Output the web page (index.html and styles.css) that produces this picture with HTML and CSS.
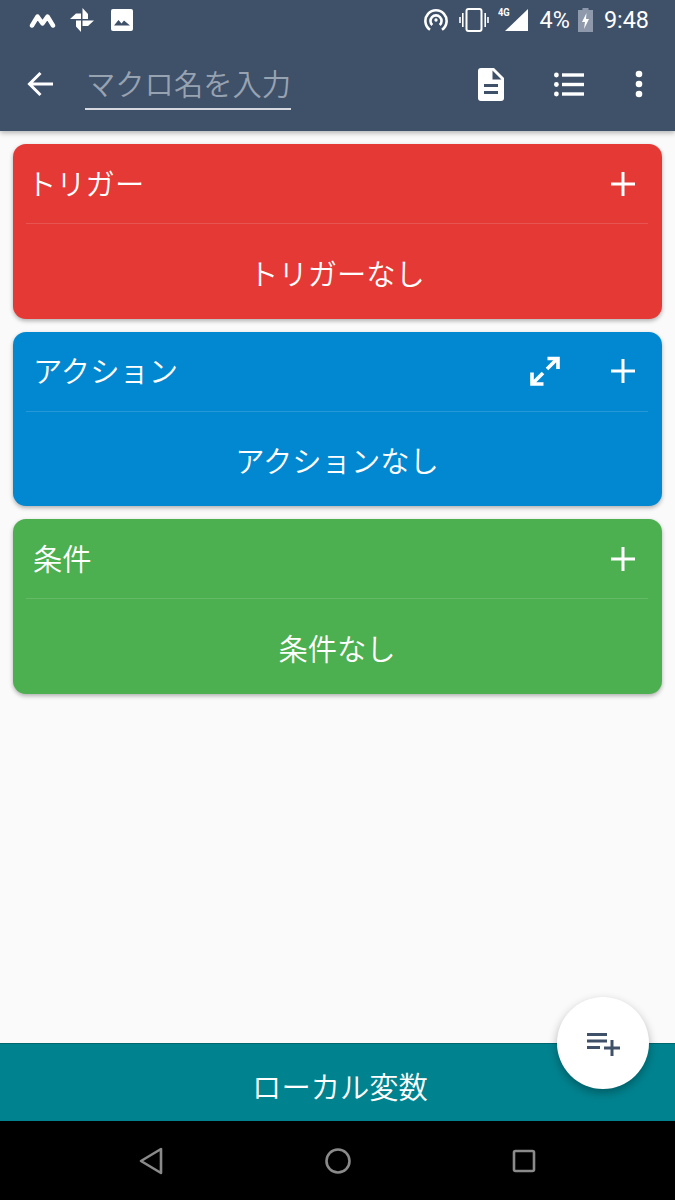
FILE: index.html
```html
<!DOCTYPE html>
<html lang="ja">
<head>
  <meta charset="UTF-8" />
  <meta name="viewport" content="width=device-width, initial-scale=1" />
  <title>マクロ編集</title>
  <link rel="stylesheet" href="styles.css">
</head>
<body>
  <div class="screen">
    <header class="appbar">
      <div class="statusbar">
        <div class="status-left">
          <svg class="ic-m" viewBox="0 0 27 15"><path d="M3 12.500 8.500 3.500 13.500 10.500 18.500 3.500 24 12.500" fill="none" stroke="#fff" stroke-width="4.400" stroke-linejoin="round" stroke-linecap="round"/></svg>
          <svg class="ic-pin" viewBox="0 0 24 24"><path fill="#fff" d="M12.500 0 18 6v5h-5.500ZM24 12.500 18 18h-5.500v-5.500ZM11 24 6 18.500v-6h5ZM0 11 6 5.500h5V11Z"/></svg>
          <svg class="ic-img" viewBox="0 0 22 22"><rect width="22" height="22" rx="2" fill="#fff"/><path fill="#3f5069" d="M3 16.500 7.500 11l3 3.500 2.500-3 6 5Z"/></svg>
        </div>
        <div class="status-right">
          <svg class="ic-hot" viewBox="0 0 26 26" fill="none" stroke="#fff" stroke-width="2.800"><path d="M6.500 23.500a11.500 11.500 0 1 1 13 0"/><path d="M9 18.500a6 6 0 1 1 8 0"/><circle cx="13" cy="13" r="1.800" fill="#fff" stroke="none"/></svg>
          <svg class="ic-vib" viewBox="0 0 30 24" fill="none" stroke="#fff"><rect x="7.500" y="1" width="15" height="22" rx="2" stroke-width="2"/><path d="M3.800 5v14M1 9v6M26.200 5v14M29 9v6" stroke-width="1.600"/></svg>
          <div class="signal">
            <span class="net">4G</span>
            <svg class="ic-sig" viewBox="0 0 23 22"><path fill="#fff" d="M23 0v22H0Z"/></svg>
          </div>
          <span class="pct">4%</span>
          <svg class="ic-bat" viewBox="0 0 15 24"><path fill="#8e9aab" d="M4.500 0h6v2H15v22H0V2h4.500Z"/><path fill="#fff" d="M8.500 5 4 14h3l-1 7 5-10H8Z"/></svg>
          <span class="clock">9:48</span>
        </div>
      </div>
      <div class="toolbar">
        <svg class="ic-back" viewBox="0 0 26 26" fill="none" stroke="#fff" stroke-width="3"><path d="M26 13H3M13.500 2 2.500 13l11 11"/></svg>
        <div class="name-field">マクロ名を入力</div>
        <svg class="ic-doc" viewBox="0 0 26 33"><path fill="#fff" d="M3 0h13l10 10v20a3 3 0 0 1-3 3H3a3 3 0 0 1-3-3V3a3 3 0 0 1 3-3Z"/><path fill="#3f5069" d="M14.500 2.500V11.500h9ZM6 16h14v3H6ZM6 23h14v3H6Z"/></svg>
        <svg class="ic-list" viewBox="0 0 30 25"><g fill="#fff"><circle cx="2.400" cy="3" r="2.400"/><circle cx="2.400" cy="12.500" r="2.400"/><circle cx="2.400" cy="22" r="2.400"/><rect x="8" y="1.300" width="22" height="3.400"/><rect x="8" y="10.800" width="22" height="3.400"/><rect x="8" y="20.300" width="22" height="3.400"/></g></svg>
        <svg class="ic-more" viewBox="0 0 8 28"><g fill="#fff"><circle cx="4" cy="4" r="3.300"/><circle cx="4" cy="14" r="3.300"/><circle cx="4" cy="24" r="3.300"/></g></svg>
      </div>
    </header>

    <main class="content">
      <section class="card card-red">
        <div class="card-head">
          <span class="card-title title-trigger">トリガー</span>
          <svg class="ic-plus" viewBox="0 0 24 24"><path fill="#fff" d="M10.500 0h3v10.500H24v3H13.500V24h-3V13.500H0v-3h10.500Z"/></svg>
        </div>
        <div class="card-body">トリガーなし</div>
      </section>
      <section class="card card-blue">
        <div class="card-head">
          <span class="card-title title-action">アクション</span>
          <svg class="ic-expand" viewBox="0 0 30 30" fill="none" stroke="#fff" stroke-width="3.600"><path d="M17 13 27 3M17.500 2.500H28v10.500M13 17 3 27M2 16.500V28h11.500"/></svg>
          <svg class="ic-plus" viewBox="0 0 24 24"><path fill="#fff" d="M10.500 0h3v10.500H24v3H13.500V24h-3V13.500H0v-3h10.500Z"/></svg>
        </div>
        <div class="card-body">アクションなし</div>
      </section>
      <section class="card card-green">
        <div class="card-head">
          <span class="card-title title-cond">条件</span>
          <svg class="ic-plus" viewBox="0 0 24 24"><path fill="#fff" d="M10.500 0h3v10.500H24v3H13.500V24h-3V13.500H0v-3h10.500Z"/></svg>
        </div>
        <div class="card-body">条件なし</div>
      </section>
    </main>

    <div class="locals">ローカル変数</div>
    <button class="fab" type="button">
      <svg viewBox="0 0 33 23"><path fill="#3f5069" d="M0 0h20v3H0ZM0 6.500h20v3H0ZM0 13h13v3H0ZM23.500 7h3v6.500H33v3h-6.500V23h-3v-6.500H17v-3h6.500Z"/></svg>
    </button>

    <nav class="navbar">
      <svg class="ic-nav-back" viewBox="0 0 24 28"><path d="M22 2v24L2 14Z" fill="none" stroke="#8a8a8a" stroke-width="2.600" stroke-linejoin="round"/></svg>
      <svg class="ic-nav-home" viewBox="0 0 26 26"><circle cx="13" cy="13" r="11.500" fill="none" stroke="#8a8a8a" stroke-width="2.600"/></svg>
      <svg class="ic-nav-recent" viewBox="0 0 24 24"><rect x="2" y="2" width="20" height="20" rx="1.500" fill="none" stroke="#8a8a8a" stroke-width="2.600"/></svg>
    </nav>
  </div>
</body>
</html>
```

FILE: styles.css
```css
* {
  box-sizing: border-box;
  margin: 0;
  padding: 0;
}

body {
  background: #fafafa;
  font-family: "Noto Sans CJK JP", "Noto Sans", sans-serif;
  font-weight: 350;
  color: #fff;
}

svg {
  display: block;
  flex: none;
}

.screen {
  position: relative;
  width: 675px;
  height: 1200px;
  display: flex;
  flex-direction: column;
  overflow: hidden;
}

/* Cabecera */
.appbar {
  height: 131px;
  background: #3f5069;
  box-shadow: 0 2px 5px rgba(0, 0, 0, 0.28);
  position: relative;
  z-index: 2;
}

.statusbar {
  height: 40px;
  display: flex;
  justify-content: space-between;
  align-items: center;
  padding: 0 26px 0 29px;
}

.status-left,
.status-right {
  display: flex;
  align-items: center;
}

.ic-m { width: 27px; height: 15px; }
.ic-pin { width: 24px; height: 24px; margin-left: 14px; }
.ic-img { width: 22px; height: 22px; margin-left: 17px; }

.ic-hot { width: 24px; height: 24px; }
.ic-vib { width: 30px; height: 24px; margin-left: 11px; }

.signal {
  position: relative;
  width: 30px;
  height: 24px;
  margin-left: 9px;
}

.net {
  position: absolute;
  left: 0;
  top: -2px;
  font: 700 11px "Roboto", sans-serif;
  transform: scaleX(0.85);
  transform-origin: left;
}

.ic-sig {
  position: absolute;
  right: 0;
  bottom: 1px;
  width: 23px;
  height: 22px;
}

.pct,
.clock {
  font: 400 23.4px/26px "Roboto", sans-serif;
}

.pct { margin-left: 12px; }
.ic-bat { width: 15px; height: 24px; margin-left: 8px; }
.clock { margin-left: 11px; }

.toolbar {
  height: 91px;
  display: flex;
  align-items: center;
  padding-bottom: 3px;
}

.ic-back { width: 26px; height: 26px; margin-left: 27px; }

.name-field {
  width: 206px;
  margin-left: 32px;
  padding-left: 1px;
  height: 48px;
  margin-top: 3px;
  font-size: 29.3px;
  line-height: 40px;
  white-space: nowrap;
  color: #98a3b2;
  border-bottom: 2px solid #d5d9df;
}

.ic-doc { width: 26px; height: 33px; margin-left: 187px; }
.ic-list { width: 30px; height: 25px; margin-left: 50px; }
.ic-more { width: 8px; height: 28px; margin-left: 51px; }

/* Tarjetas */
.content {
  flex: 1;
  padding: 13px 13px 0;
  display: flex;
  flex-direction: column;
  gap: 13px;
}

.card {
  height: 174.5px;
  border-radius: 13px;
  box-shadow: 0 2px 4px rgba(0, 0, 0, 0.3);
  padding: 0 14px 0 13px;
}

.card-red { background: #e53935; }
.card-blue { background: #0288d1; }
.card-green { background: #4caf50; }

.card-head {
  height: 80px;
  display: flex;
  align-items: center;
  border-bottom: 1px solid rgba(255, 255, 255, 0.14);
}

.card-title {
  font-size: 29.3px;
  line-height: 40px;
  flex: 1;
  padding-bottom: 4px;
}

.title-trigger { margin-left: 1px; }
.title-action { margin-left: 7px; }
.title-cond { margin-left: 7px; }

.ic-plus {
  width: 24px;
  height: 24px;
  margin-right: 13px;
}

.ic-expand {
  width: 30px;
  height: 30px;
  margin-right: 51px;
}

.card-body {
  height: 94.5px;
  display: flex;
  align-items: center;
  justify-content: center;
  font-size: 29.3px;
  padding-top: 1px;
}

/* Barra inferior */
.locals {
  height: 78px;
  background: #00838f;
  border-top: 1px solid #00666f;
  display: flex;
  align-items: center;
  justify-content: center;
  font-size: 29.3px;
  padding-top: 4px;
  padding-left: 5px;
}

.fab {
  position: absolute;
  left: 557px;
  top: 997px;
  width: 92px;
  height: 92px;
  border: none;
  border-radius: 50%;
  background: #fff;
  box-shadow: 0 4px 10px rgba(0, 0, 0, 0.3);
  display: flex;
  align-items: center;
  justify-content: center;
  padding-top: 3px;
}

.fab svg {
  width: 33px;
  height: 23px;
}

.navbar {
  height: 79px;
  background: #000;
  display: flex;
  align-items: center;
}

.ic-nav-back { width: 24px; height: 28px; margin-left: 139px; }
.ic-nav-home { width: 26px; height: 26px; margin-left: 162px; }
.ic-nav-recent { width: 24px; height: 24px; margin-left: 161px; }
```
